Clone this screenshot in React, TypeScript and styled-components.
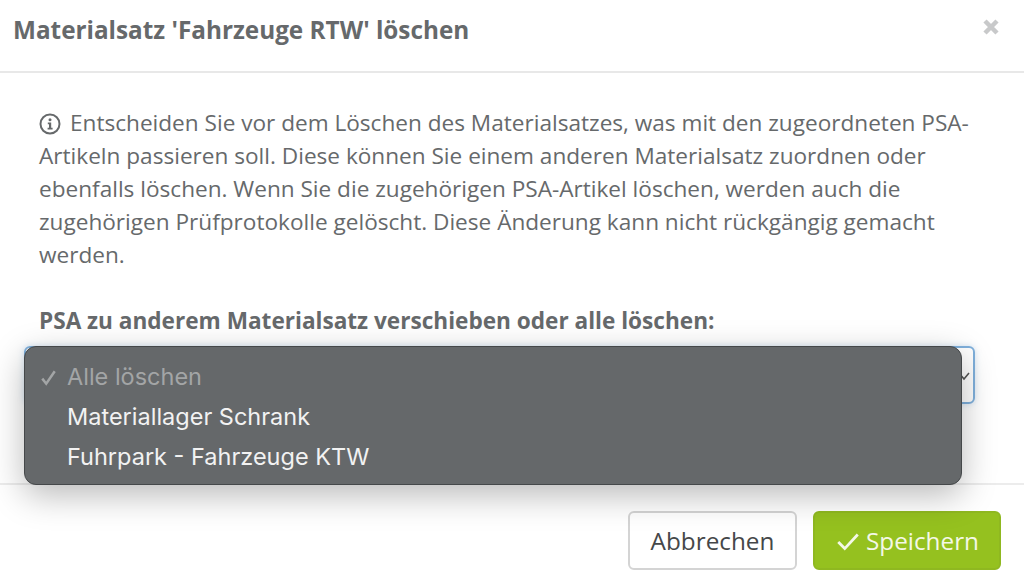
import React from 'react';
import styled, { createGlobalStyle } from 'styled-components';

const GlobalStyle = createGlobalStyle`
  html, body {
    margin: 0;
    padding: 0;
    background: #fff;
    overflow: hidden;
  }
`;

const Modal = styled('div')`
  width: 1024px;
  height: 587px;
  display: flex;
  flex-direction: column;
  background: #fff;
  font-family: "Open Sans", sans-serif;
  color: #66696b;
`;

const Header = styled('header')`
  height: 73px;
  flex: none;
  box-sizing: border-box;
  padding: 0 23px 0 13px;
  display: flex;
  align-items: center;
  justify-content: space-between;
  border-bottom: 2px solid #e8e8e8;
`;

const Title = styled('h1')`
  margin: 0 0 12px;
  font-size: 24.3px;
  line-height: 32px;
  font-weight: 700;
`;

const CloseButton = styled('button')`
  border: none;
  background: none;
  padding: 0;
  width: 20px;
  height: 20px;
  margin-bottom: 17px;
  color: #c8c9ca;
`;

const Body = styled('div')`
  flex: 1;
  box-sizing: border-box;
  padding: 33px 49px 0 39px;
  border-bottom: 2px solid #ececec;
`;

const Notice = styled('p')`
  margin: 0;
  font-size: 22.6px;
  line-height: 33px;
`;

const InfoIcon = styled('svg')`
  width: 22px;
  height: 22px;
  vertical-align: -4px;
  margin-right: 9px;
`;

const FieldLabel = styled('label')`
  display: block;
  margin-top: 33px;
  font-size: 22.6px;
  line-height: 33px;
  font-weight: 700;
`;

const SelectBox = styled('div')`
  position: relative;
  margin: 9px 0 0 -15px;
  height: 58px;
  box-sizing: border-box;
  border: 2px solid #7fb0dc;
  border-radius: 6px;
  box-shadow: 0 0 6px rgba(127, 176, 220, 0.35);
`;

const Chevron = styled('svg')`
  position: absolute;
  right: 2px;
  top: 21px;
  width: 14px;
  height: 14px;
  color: #555;
`;

const Menu = styled('ul')`
  position: absolute;
  z-index: 2;
  left: -2px;
  top: -2px;
  width: 938px;
  height: 139px;
  box-sizing: border-box;
  margin: 0;
  padding: 10px 0 0;
  list-style: none;
  background: #65686a;
  border: 1px solid #45484a;
  border-radius: 12px;
  box-shadow: 0 10px 34px rgba(0, 0, 0, 0.28);
  font-family: Inter, sans-serif;
  font-size: 23.5px;
`;

const MenuItem = styled('li')<{ $disabled?: boolean }>`
  position: relative;
  height: 40px;
  line-height: 40px;
  padding-left: 42px;
  color: ${(p) => (p.$disabled ? '#a3a5a6' : '#f2f2f2')};
`;

const MenuCheck = styled('svg')`
  position: absolute;
  left: 15px;
  top: 12px;
  width: 17px;
  height: 17px;
  color: #a3a5a6;
`;

const Footer = styled('footer')`
  flex: none;
  height: 102px;
  box-sizing: border-box;
  padding: 26px 23px 0 0;
  display: flex;
  justify-content: flex-end;
  gap: 16px;
`;

const Button = styled('button')<{ $primary?: boolean }>`
  height: 59px;
  width: ${(p) => (p.$primary ? '188px' : '169px')};
  box-sizing: border-box;
  border-radius: 6px;
  border: 2px solid ${(p) => (p.$primary ? '#8fb820' : '#d4d4d4')};
  background: ${(p) => (p.$primary ? '#95c11f' : '#fff')};
  color: ${(p) => (p.$primary ? '#f4f8e6' : '#454749')};
  font-family: "Open Sans", sans-serif;
  font-size: 24.3px;
  padding: 0;
  display: flex;
  align-items: center;
  justify-content: center;
  gap: 5px;
`;

const ButtonCheck = styled('svg')`
  width: 26px;
  height: 26px;
`;

const App: React.FC = () => {
  return (
    <Modal>
      <GlobalStyle />
      <Header>
        <Title>Materialsatz 'Fahrzeuge RTW' löschen</Title>
        <CloseButton aria-label="Schließen">
          <svg viewBox="0 0 20 20" width="20" height="20">
            <path d="M4 4 L16 16 M16 4 L4 16" stroke="currentColor" strokeWidth="4.5" fill="none" />
          </svg>
        </CloseButton>
      </Header>
      <Body>
        <Notice>
          <InfoIcon viewBox="0 0 22 22">
            <circle cx="11" cy="11" r="9.5" fill="none" stroke="currentColor" strokeWidth="2" />
            <circle cx="11" cy="6.8" r="1.5" fill="currentColor" />
            <path d="M8.8 9.6 H12.2 V14.8 H13.6 V16.4 H8.6 V14.8 H10 V11.2 H8.8 Z" fill="currentColor" />
          </InfoIcon>
          Entscheiden Sie vor dem Löschen des Materialsatzes, was mit den zugeordneten PSA-Artikeln passieren soll. Diese können Sie einem anderen Materialsatz zuordnen oder ebenfalls löschen. Wenn Sie die zugehörigen PSA-Artikel löschen, werden auch die zugehörigen Prüfprotokolle gelöscht. Diese Änderung kann nicht rückgängig gemacht werden.
        </Notice>
        <FieldLabel>PSA zu anderem Materialsatz verschieben oder alle löschen:</FieldLabel>
        <SelectBox>
          <Chevron viewBox="0 0 14 14">
            <path d="M2 4 L7 10 L12 4" fill="none" stroke="currentColor" strokeWidth="1.6" />
          </Chevron>
          <Menu>
            <MenuItem $disabled>
              <MenuCheck viewBox="0 0 15 15">
                <path d="M2 8.5 L5.5 13 L13 2" fill="none" stroke="currentColor" strokeWidth="2.2" />
              </MenuCheck>
              Alle löschen
            </MenuItem>
            <MenuItem>Materiallager Schrank</MenuItem>
            <MenuItem>Fuhrpark - Fahrzeuge KTW</MenuItem>
          </Menu>
        </SelectBox>
      </Body>
      <Footer>
        <Button>Abbrechen</Button>
        <Button $primary>
          <ButtonCheck viewBox="0 0 24 24">
            <path d="M3 13 L9 19 L21 6" fill="none" stroke="currentColor" strokeWidth="2.6" />
          </ButtonCheck>
          Speichern
        </Button>
      </Footer>
    </Modal>
  );
};

export default App;
